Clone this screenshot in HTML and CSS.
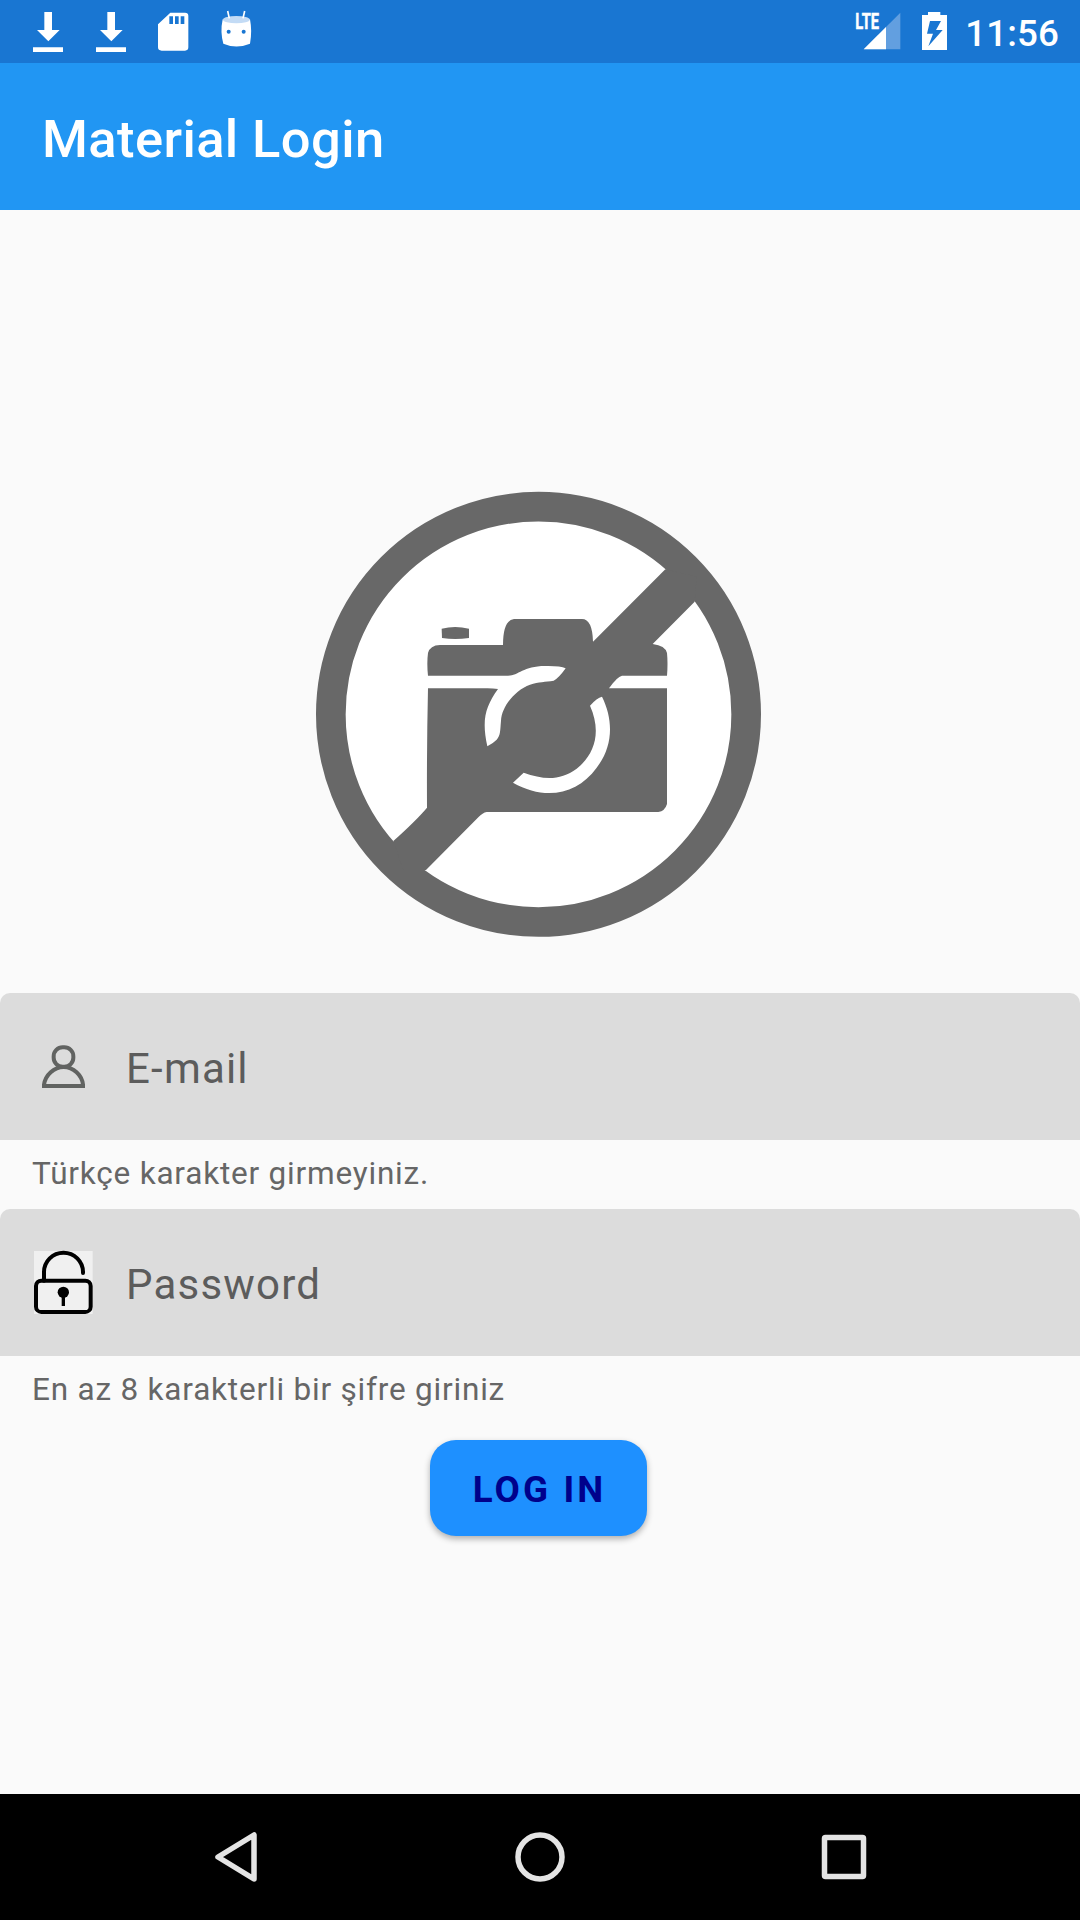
FILE: index.html
```html
<!DOCTYPE html>
<html lang="tr">
<head>
<meta charset="utf-8">
<title>Material Login</title>
<link rel="stylesheet" href="styles.css">
</head>
<body>
<div class="screen">
  <div class="status-bar">
    <div class="notifications">
      <svg class="status-icon" viewBox="0 0 90 189"><path d="M34 36h23v54h23l-34 34-34-34h22zM0 142h90v14H0z"/></svg>
      <svg class="status-icon" viewBox="0 0 90 189"><path d="M34 36h23v54h23l-34 34-34-34h22zM0 142h90v14H0z"/></svg>
      <svg class="status-icon" viewBox="0 0 90 189"><path fill-rule="evenodd" d="M34 38h44q10 0 10 9v95q0 10-10 10H8q-11 0-11-10V73zM31 49v23h11V49zm17 0v23h11V49zm17 0v23h11V49z"/></svg>
      <svg class="status-icon" viewBox="0 0 90 189"><path d="M2 58Q45 78 84 58q7 36 0 73Q43 148 4 131-6 96 2 58z"/><ellipse cx="43" cy="59" rx="40" ry="11" fill="#c3dbf5"/><path d="M17 33l5 22M68 33l-5 22" stroke="#fff" stroke-width="5"/><g fill="#1976d2"><circle cx="20" cy="95" r="6"/><circle cx="65" cy="95" r="6"/></g></svg>
    </div>
    <div class="system">
      <svg class="signal" viewBox="0 0 138 189"><path fill="#629fe0" d="M136 38v110H26z"/><path d="M93 81v67H26z"/><text class="lte" x="1" y="87" textLength="71" lengthAdjust="spacingAndGlyphs">LTE</text></svg>
      <svg class="battery" viewBox="0 0 75 189"><path fill-rule="evenodd" d="M18 36h37v9h20v105H0V45h18zM24 63l-9 38h18l-14 38 43-49H42l15-27z"/></svg>
      <span class="clock">11:56</span>
    </div>
  </div>
  <header class="app-bar"><h1>Material Login</h1></header>
  <main>
    <svg class="photo" viewBox="0 0 1440 1410">
      <circle cx="715.500" cy="703" r="623" fill="#fff" stroke="#686868" stroke-width="89"/>
      <g fill="#686868">
        <path d="M1096 268L879 485Q877 417 846 417H642Q609 420 609 495H420Q390 496 384 519 380 550 384 587V624Q380 800 381 983 350 1020 280 1083L310 1170 378 1170 535 1012Q548 998 560 996H1075Q1095 993 1101 972V587Q1104 550 1101 519 1096 497 1058 492L1184 365 1190 290z"/>
        <path d="M425 446q40-10 82 0v28q-42 6-81 0z"/>
      </g>
      <g fill="#fff">
        <path d="M376 587H625C655 587 670 558 735 558Q780 557 797 565 775 596 761 602C735 607 717 604 690 614C645 630 605 680 603 722C600 755 602 764 590 779Q578 791 562 799C545 720 555 682 594 627Q575 624 550 625H376z"/>
        <path d="M1108 587H966Q951 590 927 625H1108z"/>
        <path d="M906 650Q891 653 870 677C905 755 885 823 830 866 780 903 730 899 671 878L639 908C735 962 830 945 890 863 937 803 943 725 906 650z"/>
      </g>
    </svg>
    <div class="field">
      <svg class="field-icon" viewBox="0 0 180 189"><g fill="none" stroke="#616361" stroke-width="12"><rect x="59" y="36.500" width="59" height="59" rx="27"/><path d="M30 153v-4C34 120 60 96 89 96s55 24 58 53v4z"/></g></svg>
      <span>E-mail</span>
    </div>
    <p class="helper">Türkçe karakter girmeyiniz.</p>
    <div class="field">
      <svg class="field-icon" viewBox="0 0 180 189"><path fill="#f0f0f0" d="M0 0h176v189H0z"/><g fill="none" stroke="#000" stroke-width="12"><rect x="6" y="89" width="164" height="94" rx="16"/><path d="M30 89V63a58.500 58 0 0 1 117 0v3" stroke-linecap="round"/></g><circle cx="88" cy="124" r="17"/><path d="M83 135h10v30H83z"/></svg>
      <span>Password</span>
    </div>
    <p class="helper">En az 8 karakterli bir şifre giriniz</p>
    <button class="login">LOG IN</button>
  </main>
  <nav class="nav-bar">
    <svg class="nav-icon" viewBox="0 0 60 60"><path d="M48 8v44L12 30z"/></svg>
    <svg class="nav-icon" viewBox="0 0 60 60"><circle cx="30" cy="30" r="22"/></svg>
    <svg class="nav-icon" viewBox="0 0 60 60"><rect x="10.500" y="10.500" width="39" height="39" rx="1"/></svg>
  </nav>
</div>
</body>
</html>
```
FILE: styles.css
```css
* { box-sizing: border-box; }
body { margin: 0; font-family: Roboto, sans-serif; }
svg { display: block; flex: none; overflow: visible; }
.screen { width: 1080px; height: 1920px; display: flex; flex-direction: column; background: #fafafa; }
.status-bar { height: 63px; flex: none; display: flex; justify-content: space-between; padding: 0 21px 0 33px; background: #1976d2; color: #fff; fill: #fff; }
.notifications { display: flex; gap: 33px; }
.status-icon { width: 30px; height: 63px; }
.system { display: flex; }
.signal { width: 46px; height: 63px; margin-right: 21px; }
.lte { font: 700 67px Roboto, sans-serif; stroke: #fff; stroke-width: 1.5px; }
.battery { width: 25px; height: 63px; margin-right: 18px; }
.clock { font-size: 36.75px; font-weight: 500; line-height: 63px; padding-top: 2px; letter-spacing: 0.1px; }
.app-bar { height: 147px; flex: none; display: flex; align-items: center; padding: 4px 42px 0; background: #2196f3; color: #fff; }
h1 { margin: 0; font-size: 52.5px; font-weight: 500; letter-spacing: 0.4px; }
main { flex: 1; display: flex; flex-direction: column; padding-top: 270px; }
.photo { width: 480px; height: 470px; align-self: center; margin-bottom: 43px; }
.field { height: 147px; flex: none; display: flex; align-items: center; gap: 32px; padding: 0 34px; background: #dcdcdc; border-radius: 10px 10px 0 0; color: #5c5c5c; font-size: 42px; letter-spacing: 1.2px; }
.field-icon { width: 60px; height: 63px; }
.field span { padding-top: 4px; }
.helper { margin: 0; height: 69px; flex: none; padding: 0 32px; font-size: 31.5px; line-height: 67px; letter-spacing: 0.8px; color: #666; }
.login { width: 217px; height: 96px; margin-top: 15px; margin-left: 430px; padding: 3px 0 0 2px; border: 0; border-radius: 26px; background: #1e90ff; color: #00008b; font: 700 36.75px Roboto, sans-serif; letter-spacing: 3.1px; box-shadow: 0 3px 6px rgba(0,0,0,.3); }
.nav-bar { height: 126px; flex: none; display: flex; justify-content: center; gap: 244px; background: #000; align-items: center; }
.nav-icon { width: 60px; height: 60px; fill: none; stroke: #e4e4e4; stroke-width: 5.5; stroke-linejoin: round; }
```
